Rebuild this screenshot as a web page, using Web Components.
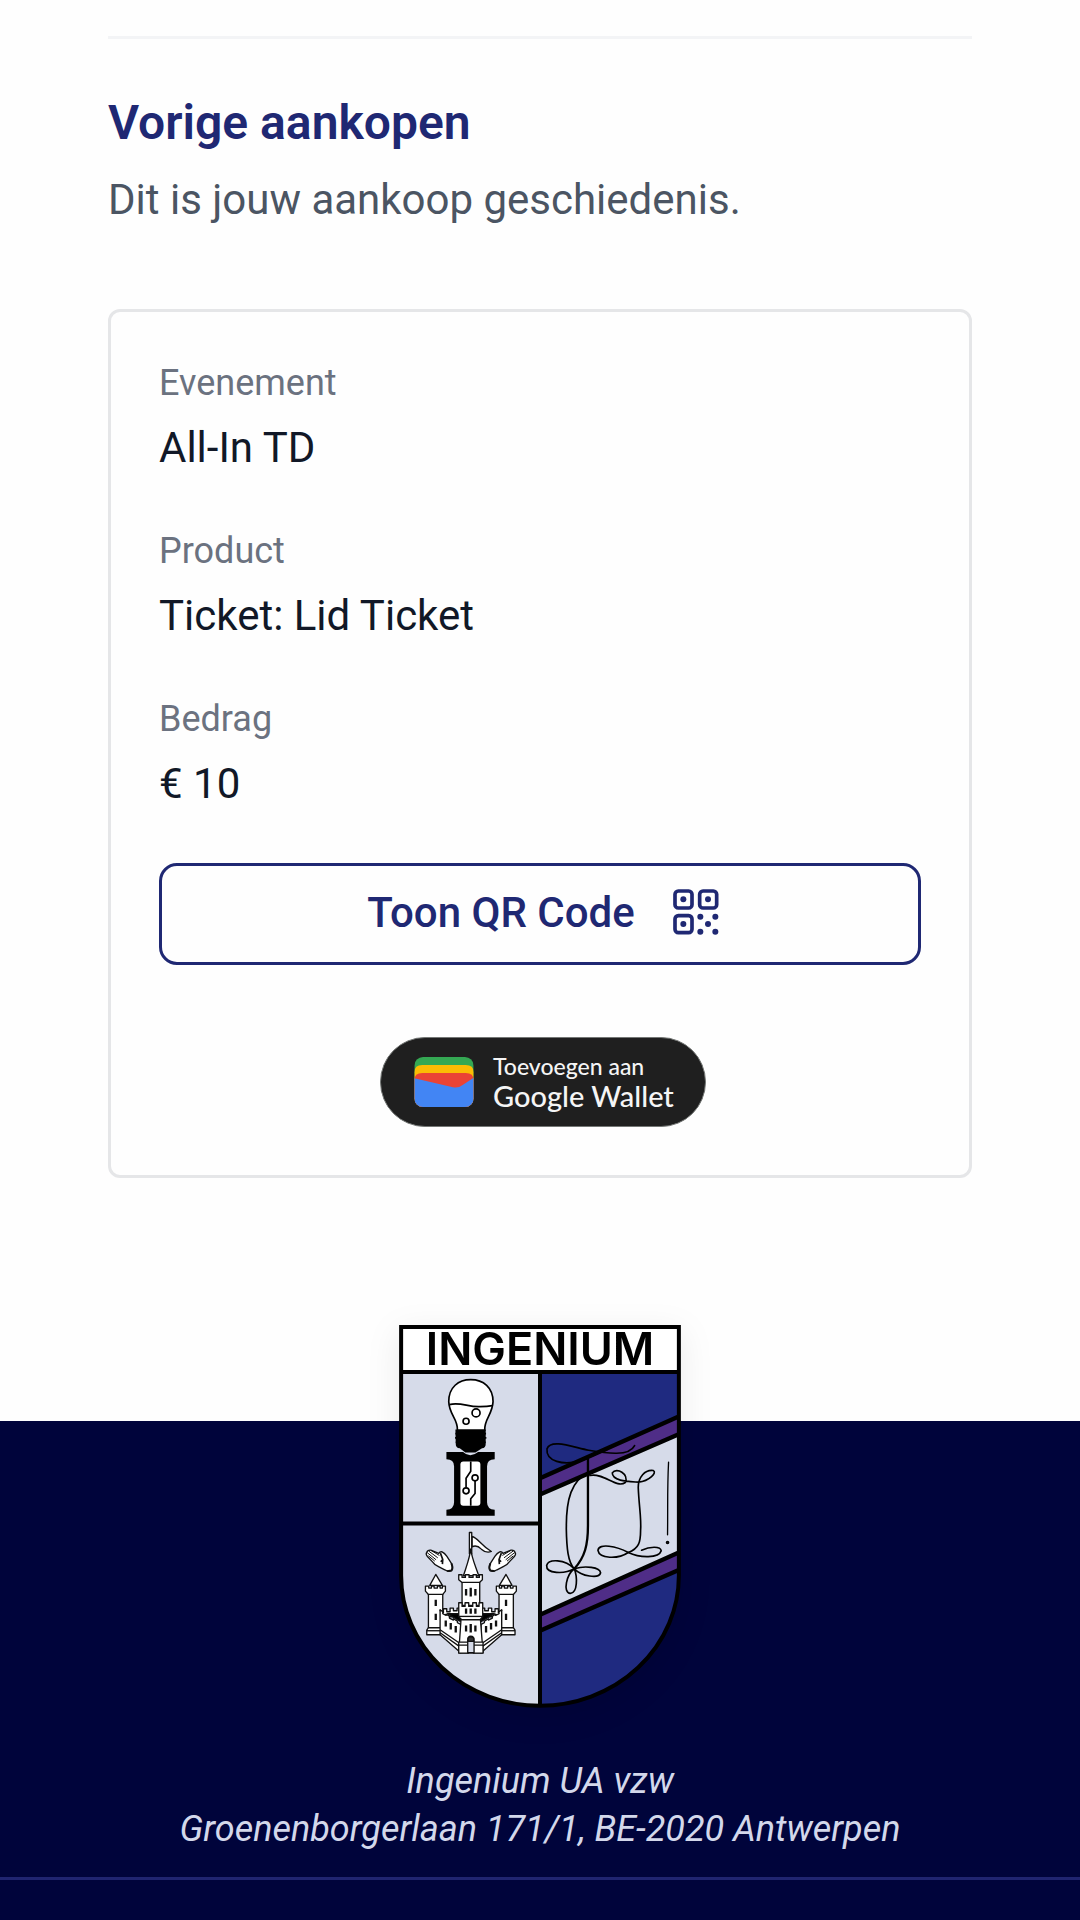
<!DOCTYPE html>
<html lang="nl">
<head>
<meta charset="utf-8">
<meta name="viewport" content="width=device-width, initial-scale=1">
<title>Ingenium - Vorige aankopen</title>
<style>
  body {
    margin: 0;
    min-height: 100vh;
    display: flex;
    flex-direction: column;
    background: #fefefe;
    font-family: Roboto, "Liberation Sans", sans-serif;
    color: #111827;
  }
</style>
</head>
<body>
  <purchase-history>
    <span slot="title">Vorige aankopen</span>
    <span slot="intro">Dit is jouw aankoop geschiedenis.</span>
    <purchase-card>
      <purchase-field label="Evenement">All-In TD</purchase-field>
      <purchase-field label="Product">Ticket: Lid Ticket</purchase-field>
      <purchase-field label="Bedrag">€ 10</purchase-field>
      <qr-button slot="actions">Toon QR Code</qr-button>
      <wallet-button slot="actions"></wallet-button>
    </purchase-card>
  </purchase-history>
  <site-footer>
    <ingenium-shield slot="logo"></ingenium-shield>
    <span slot="name">Ingenium UA vzw</span>
    <span slot="address">Groenenborgerlaan 171/1, BE-2020 Antwerpen</span>
  </site-footer>

<script>
  class BaseElement extends HTMLElement {
    constructor() {
      super();
      this.attachShadow({ mode: "open" });
    }

    connectedCallback() {
      const template = document.createElement("template");
      template.innerHTML = `<style>${this.getStyles()}</style>${this.getTemplate()}`;
      this.shadowRoot.replaceChildren(template.content.cloneNode(true));
    }
  }

  class PurchaseHistory extends BaseElement {
    getTemplate() {
      return `
        <section>
          <header>
            <h2><slot name="title"></slot></h2>
            <p><slot name="intro"></slot></p>
          </header>
          <slot></slot>
        </section>
      `;
    }

    getStyles() {
      return `
        :host {
          display: block;
          padding: 36px 10% 0;
        }
        section {
          border-top: 3px solid #f3f4f6;
          padding-top: 47px;
        }
        header {
          display: flex;
          flex-direction: column;
          gap: 9px;
          margin-bottom: 78px;
        }
        h2, p { margin: 0; }
        h2 {
          font-size: 48px;
          line-height: 73px;
          font-weight: 600;
          color: #1f2873;
        }
        p {
          font-size: 42px;
          line-height: 63px;
          color: #4b5563;
        }
      `;
    }
  }

  class PurchaseCard extends BaseElement {
    getTemplate() {
      return `
        <div class="fields"><slot></slot></div>
        <div class="actions"><slot name="actions"></slot></div>
      `;
    }

    getStyles() {
      return `
        :host {
          display: flex;
          flex-direction: column;
          gap: 48px;
          padding: 45px 48px 48px;
          border: 3px solid #e5e6e8;
          border-radius: 12px;
        }
        .fields {
          display: flex;
          flex-direction: column;
          gap: 46px;
        }
        .actions {
          display: flex;
          flex-direction: column;
          gap: 72px;
        }
      `;
    }
  }

  class PurchaseField extends BaseElement {
    getTemplate() {
      return `
        <span class="label">${this.getAttribute("label")}</span>
        <span class="value"><slot></slot></span>
      `;
    }

    getStyles() {
      return `
        :host {
          display: flex;
          flex-direction: column;
          gap: 7px;
        }
        .label {
          font-size: 36px;
          line-height: 52px;
          color: #6b7280;
        }
        .value {
          font-size: 42px;
          line-height: 63px;
        }
      `;
    }
  }

  class QrButton extends BaseElement {
    getTemplate() {
      return `
        <button type="button">
          <slot></slot>
          <svg viewBox="0 0 138 138" aria-hidden="true">
            <g fill="none" stroke="currentColor" stroke-width="11">
              <rect x="6" y="6" width="51" height="51" rx="10"/>
              <rect x="80" y="6" width="51" height="51" rx="10"/>
              <rect x="6" y="80" width="51" height="51" rx="10"/>
            </g>
            <g fill="currentColor">
              <circle cx="31" cy="31" r="9"/>
              <circle cx="105" cy="31" r="9"/>
              <circle cx="31" cy="105" r="9"/>
              <circle cx="82" cy="83" r="9"/>
              <circle cx="127" cy="83" r="9"/>
              <circle cx="105" cy="105" r="9"/>
              <circle cx="82" cy="128" r="9"/>
              <circle cx="127" cy="128" r="9"/>
            </g>
          </svg>
        </button>
      `;
    }

    getStyles() {
      return `
        :host { display: block; }
        button {
          display: flex;
          align-items: center;
          justify-content: center;
          gap: 38px;
          box-sizing: border-box;
          width: 100%;
          height: 102px;
          padding: 0 24px 4px;
          border: 3px solid #1f2873;
          border-radius: 18px;
          background: #fefefe;
          color: #1f2873;
          font: 500 42px/63px Roboto, "Liberation Sans", sans-serif;
          cursor: pointer;
        }
        svg {
          width: 46px;
          height: 46px;
          margin-right: -6px;
        }
      `;
    }
  }

  class WalletButton extends BaseElement {
    getTemplate() {
      return `
        <a href="#wallet">
          <svg viewBox="0 0 178 150" aria-hidden="true">
            <defs><clipPath id="w"><rect width="178" height="150" rx="26"/></clipPath></defs>
            <g clip-path="url(#w)">
              <rect width="178" height="150" fill="#34a853"/>
              <path d="M0 46Q0 24 24 24H154Q178 24 178 46V150H0Z" fill="#fbbc04"/>
              <path d="M0 70Q0 48 24 48H154Q178 48 178 70V150H0Z" fill="#ea4335"/>
              <path d="M0 64L116 91Q132 94 145 84L178 62V150H0Z" fill="#4285f4"/>
            </g>
          </svg>
          <span class="text">
            <span class="small">Toevoegen aan</span>
            <span class="big">Google Wallet</span>
          </span>
        </a>
      `;
    }

    getStyles() {
      return `
        :host {
          display: flex;
          justify-content: center;
          padding-left: 6px;
        }
        a {
          display: flex;
          align-items: center;
          gap: 19px;
          box-sizing: border-box;
          width: 326px;
          height: 90px;
          padding-left: 33px;
          border: 1px solid #747775;
          border-radius: 45px;
          background: #1f1f1f;
          color: #f5f5f5;
          text-decoration: none;
          white-space: nowrap;
        }
        svg {
          width: 60px;
          height: 50px;
        }
        .text {
          display: flex;
          flex-direction: column;
          font-family: Lato, Roboto, sans-serif;
          font-weight: 500;
        }
        .small {
          font-size: 23px;
          line-height: 28px;
        }
        .big {
          font-size: 29px;
          line-height: 32px;
        }
      `;
    }
  }

  class IngeniumShield extends BaseElement {
    getTemplate() {
      return `
        <svg viewBox="27 48 846 1150" role="img" aria-label="Ingenium">
          <defs>
            <clipPath id="shield"><path d="M33 54H867V800A417 391 0 0 1 33 800Z"/></clipPath>
          </defs>
          <g clip-path="url(#shield)">
            <rect x="27" y="48" width="423" height="1150" fill="#d6dbe9"/>
            <rect x="450" y="48" width="423" height="1150" fill="#1f2a80"/>
            <path d="M450 506L873 320V728L450 966Z" fill="#4f2d87"/>
            <path d="M450 557L873 373V728L450 918Z" fill="#d6dbe9"/>
            <path d="M450 918L873 728V781L450 966Z" fill="#4f2d87"/>
            <path d="M450 966L873 781V1198H450Z" fill="#1f2a80"/>
            <path d="M450 508L873 320M450 557L873 373M450 918L873 728M450 966L873 781" stroke="#000" stroke-width="13"/>
            <rect x="27" y="48" width="846" height="141" fill="#fff"/>
            <path d="M27 189H873M450 189V1198M27 644H450" stroke="#000" stroke-width="12"/>
          </g>
          <path d="M33 54H867V800A417 391 0 0 1 33 800Z" fill="none" stroke="#000" stroke-width="12"/>
          <text x="450" y="168" text-anchor="middle">INGENIUM</text>

          ${this.getBulb()}
          ${this.getScript()}
          ${this.getCastle()}
        </svg>
      `;
    }

    // bulb standing on the letter I
    getBulb() {
      return `
        <g stroke="#000" stroke-width="5" fill="#fff">
          <path d="M202 364C204 330 177 318 176 278C176 235 205 212 242 212C280 212 309 236 309 278C307 318 282 330 284 364Z"/>
          <path d="M178 287C210 278 235 295 270 293C285 293 297 292 307 290" fill="none"/>
          <circle cx="258" cy="312" r="12"/>
          <circle cx="228" cy="337" r="9"/>
        </g>
        <path d="M196 362H287V405Q287 417 276 418L256 431H226L209 418Q197 417 197 405Z"/>
        <path d="M196 374H288M195 387H289M197 400H287" stroke="#000" stroke-width="5"/>
        <path d="M169 429H219Q240 449 264 429H314V451Q291 451 291 472V580Q291 601 314 603V621H169V603Q192 601 192 580V472Q192 451 169 451Z"/>
        <rect x="211" y="458" width="60" height="133" rx="9" fill="#fff"/>
        <g stroke="#000" stroke-width="5" fill="none">
          <path d="M242 458V487L228 508V536M255 516V554L242 570V591"/>
          <circle cx="255" cy="507" r="9"/>
          <circle cx="228" cy="546" r="9"/>
        </g>
      `;
    }

    // curled strokes on the diagonal band
    getScript() {
      return `
        <g stroke="#000" stroke-width="5" fill="none" stroke-linecap="round">
          <path d="M734 410C718 443 652 434 596 424C552 416 482 388 471 420C467 458 520 470 570 456C604 446 622 430 650 424"/>
          <path d="M594 450V650C594 708 585 745 553 780" stroke-width="7"/>
          <path d="M596 490C545 515 528 570 529 660C530 718 534 760 553 780"/>
          <path d="M553 780C525 750 475 750 470 770C468 795 522 797 553 780C585 770 630 775 632 792C627 812 575 802 553 780C530 797 517 851 541 854C564 852 562 803 553 780"/>
          <path d="M600 500C640 490 680 540 706 521C718 495 680 474 667 492C667 518 719 518 746 520C778 517 803 491 790 485C765 482 745 505 745 536C747 590 755 630 752 665C752 700 747 720 715 731"/>
          <path d="M715 731C684 752 628 750 624 725C626 702 680 712 715 731C750 748 807 749 814 726C812 711 779 713 755 724"/>
          <path d="M836 460C832 540 834 580 833 678" stroke-width="4"/>
          <circle cx="833" cy="701" r="3"/>
        </g>
      `;
    }

    getCastle() {
      const hand = `
        <path d="M110 101Q112 93 122 94L146 104Q149 98 156 99Q164 103 170 112L184 134Q190 149 184 155Q176 161 164 153L144 143Q134 139 128 130L112 113Q106 106 110 101Z"/>
        <path d="M112 102L138 123M116 97L143 117M123 95L148 110M115 111L134 127" stroke-width="3" fill="none"/>
        <path d="M151 103L158 122L157 136M158 122L152 129" stroke-width="5" fill="none"/>
        <path d="M184 134Q190 149 184 155L171 157" stroke-width="6" fill="none"/>
      `;
      const tower = `
        <path d="M119 200L137 167L157 200Z"/>
        <path d="M115 226H158V332H115Z"/>
        <path d="M106 202H116V208H124V202H132V208H142V202H150V208H157V202H166V217L158 227H115L106 217Z"/>
        <path d="M115 327H157V348H110V334Z"/>
        <path d="M110 336H157" fill="none"/>
        <path d="M137 243V262M137 285V304" stroke-width="7"/>
      `;
      const wall = `
        <path d="M150 275L160 282V270H170V279H180V268H190V276H201V268H212V294H160Z"/>
        <path d="M172 285H211V308Z" fill="#000"/>
        <path d="M150 273L158 279V285L168 290V286L178 292V298L190 304V300L202 307V312L212 317V402L150 348Z"/>
        <path d="M150 333L212 376M150 342L212 386" fill="none"/>
        <path d="M167 305V323M182 313V332M197 322V341" stroke-width="7"/>
      `;
      return `
        <g transform="translate(0 630)" stroke="#111" stroke-width="4" stroke-linejoin="round" fill="#fff">
          ${hand}
          <g transform="translate(485 0) scale(-1 1)">${hand}</g>
          ${tower}
          <g transform="translate(485 0) scale(-1 1)">${tower}</g>
          ${wall}
          <g transform="translate(485 0) scale(-1 1)">${wall}</g>
          <path d="M246 53C263 56 270 78 304 98Q288 104 274 91Q260 77 246 84Z"/>
          <path d="M238 41H245V105H238Z"/>
          <path d="M242 90C239 120 228 145 220 171H266C258 145 245 120 242 90Z"/>
          <path d="M216 187H269V260H216Z"/>
          <path d="M206 168H216V176H226V168H237V176H249V168H259V176H268V168H277V183L268 191H216L206 183Z"/>
          <path d="M228 211V230M242 207V233M256 211V230" stroke-width="7"/>
          <path d="M213 300H271L279 402H206Z"/>
          <path d="M206 252H216V263H225V252H236V263H248V252H259V263H267V252H278V294L270 303H215L206 294Z"/>
          <path d="M206 293H278" fill="none"/>
          <path d="M228 269V285M242 269V285M256 269V285M228 320V338M242 316V341M256 320V338" stroke-width="7"/>
          <path d="M206 370H235V403H206ZM250 370H279V403H250Z"/>
          <path d="M206 379H233M252 379H279" fill="none"/>
          <path d="M233 402V365Q233 352 242 352Q252 352 252 365V402Z" fill="#d6dbe9"/>
          <path d="M234 368V358Q242 350 251 358V368Z" fill="#333"/>
        </g>
      `;
    }

    getStyles() {
      return `
        :host { display: block; }
        svg {
          display: block;
          width: 282px;
          height: 383px;
          overflow: visible;
          filter: drop-shadow(0 8px 16px rgba(0, 0, 0, 0.08));
        }
        text {
          font-family: Inter, Roboto, sans-serif;
          font-size: 135px;
          font-weight: 600;
        }
      `;
    }
  }

  class SiteFooter extends BaseElement {
    getTemplate() {
      return `
        <footer>
          <slot name="logo"></slot>
          <address>
            <slot name="name"></slot><br>
            <slot name="address"></slot>
          </address>
        </footer>
      `;
    }

    getStyles() {
      return `
        :host {
          display: block;
          flex: 1;
          margin-top: 243px;
          background: #00043b;
        }
        footer {
          display: flex;
          flex-direction: column;
          align-items: center;
          gap: 49px;
          padding-bottom: 24px;
          border-bottom: 3px solid #1f2470;
        }
        ::slotted(ingenium-shield) { margin-top: -96px; }
        address {
          text-align: center;
          font-size: 36px;
          line-height: 48px;
          font-style: italic;
          color: #d3d8eb;
        }
      `;
    }
  }

  customElements.define("purchase-history", PurchaseHistory);
  customElements.define("purchase-card", PurchaseCard);
  customElements.define("purchase-field", PurchaseField);
  customElements.define("qr-button", QrButton);
  customElements.define("wallet-button", WalletButton);
  customElements.define("ingenium-shield", IngeniumShield);
  customElements.define("site-footer", SiteFooter);
</script>
</body>
</html>
